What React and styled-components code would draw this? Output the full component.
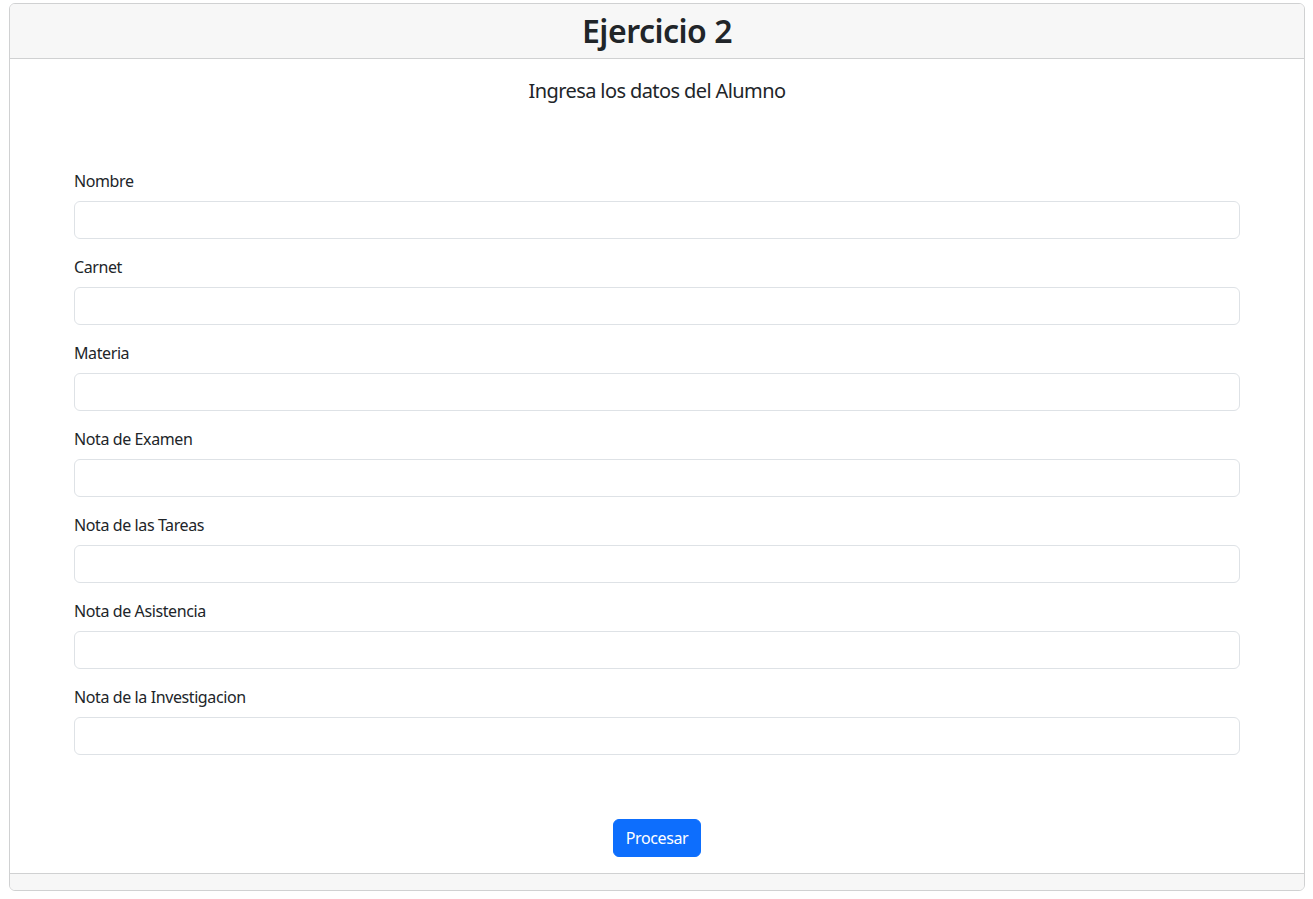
import styled, { createGlobalStyle } from 'styled-components';

const GlobalStyle = createGlobalStyle`
  * { box-sizing: border-box; }
  body {
    margin: 0;
    background: #fff;
    color: #212529;
    font-family: "Segoe UI", "Noto Sans", "Liberation Sans", sans-serif;
    font-size: 16px;
    line-height: 1.5;
  }
`;

const Page = styled.div`
  padding: 3px 8px 8px 9px;
`;

const Card = styled.div`
  border: 1px solid #d0d1d2;
  border-radius: 6px;
  overflow: hidden;
`;

const CardHeader = styled.div`
  background: #f7f7f7;
  border-bottom: 1px solid #d0d1d2;
  padding: 8px 16px;
`;

const Title = styled.h2`
  margin: 0;
  text-align: center;
  font-size: 32px;
  font-weight: 600;
  line-height: 1.2;
  letter-spacing: -0.5px;
`;

const CardBody = styled.div`
  padding: 20px 16px 16px;
`;

const Subtitle = styled.p`
  margin: 0 0 66px;
  text-align: center;
  font-size: 20px;
  line-height: 24px;
  letter-spacing: -0.6px;
`;

const Form = styled.form`
  padding: 0 48px;
`;

const Field = styled.div`
  margin-bottom: 16px;
`;

const Label = styled.label`
  display: block;
  margin-bottom: 8px;
  font-size: 16px;
  line-height: 24px;
  letter-spacing: -0.4px;
`;

const Input = styled.input`
  display: block;
  width: 100%;
  height: 38px;
  padding: 6px 12px;
  font: inherit;
  color: #212529;
  border: 1px solid #dee2e6;
  border-radius: 6px;
  background: #fff;
  outline: none;
`;

const Actions = styled.div`
  display: flex;
  justify-content: center;
  padding-top: 48px;
`;

const Button = styled.button`
  height: 38px;
  padding: 6px 12px;
  font: inherit;
  letter-spacing: -0.4px;
  color: #fff;
  background: #0d6efd;
  border: 1px solid #0d6efd;
  border-radius: 6px;
  cursor: pointer;
`;

const CardFooter = styled.div`
  background: #f7f7f7;
  border-top: 1px solid #d0d1d2;
  height: 17px;
`;

const fields = [
  'Nombre',
  'Carnet',
  'Materia',
  'Nota de Examen',
  'Nota de las Tareas',
  'Nota de Asistencia',
  'Nota de la Investigacion',
];

export default function App() {
  return (
    <>
      <GlobalStyle />
      <Page>
        <Card>
          <CardHeader>
            <Title>Ejercicio 2</Title>
          </CardHeader>
          <CardBody>
            <Subtitle>Ingresa los datos del Alumno</Subtitle>
            <Form onSubmit={(e) => e.preventDefault()}>
              {fields.map((f) => (
                <Field key={f}>
                  <Label>{f}</Label>
                  <Input type="text" />
                </Field>
              ))}
              <Actions>
                <Button type="submit">Procesar</Button>
              </Actions>
            </Form>
          </CardBody>
          <CardFooter />
        </Card>
      </Page>
    </>
  );
}
